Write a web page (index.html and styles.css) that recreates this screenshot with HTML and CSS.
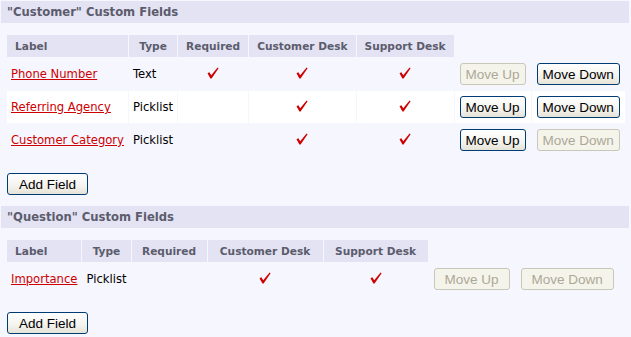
FILE: index.html
```html
<!DOCTYPE html>
<html lang="en">

<head>
    <meta charset="UTF-8">
    <title>Custom Fields</title>
    <link rel="stylesheet" href="styles.css">
</head>

<body>
    <svg width="0" height="0" style="position: absolute;">
        <symbol id="check" viewBox="0 0 12 12">
            <path d="M0.5 6.2 L2.4 5.3 L4.2 8.2 L10.6 0.4 L11.6 1.2 L4.6 11.4 L3.4 11.4 Z" fill="#d00000"/>
        </symbol>
    </svg>

    <!-- Customer fields -->
    <div class="section-title">"Customer" Custom Fields</div>
    <table class="fields">
        <tr>
            <th class="left">Label</th>
            <th>Type</th>
            <th>Required</th>
            <th>Customer Desk</th>
            <th>Support Desk</th>
        </tr>
        <tr>
            <td><a href="#">Phone Number</a></td>
            <td>Text</td>
            <td class="mark"><svg class="check"><use href="#check"/></svg></td>
            <td class="mark"><svg class="check"><use href="#check"/></svg></td>
            <td class="mark"><svg class="check"><use href="#check"/></svg></td>
            <td class="act"><button disabled>Move Up</button></td>
            <td class="act"><button>Move Down</button></td>
        </tr>
        <tr class="alt">
            <td><a href="#">Referring Agency</a></td>
            <td>Picklist</td>
            <td></td>
            <td class="mark"><svg class="check"><use href="#check"/></svg></td>
            <td class="mark"><svg class="check"><use href="#check"/></svg></td>
            <td class="act"><button>Move Up</button></td>
            <td class="act"><button>Move Down</button></td>
        </tr>
        <tr>
            <td><a href="#">Customer Category</a></td>
            <td>Picklist</td>
            <td></td>
            <td class="mark"><svg class="check"><use href="#check"/></svg></td>
            <td class="mark"><svg class="check"><use href="#check"/></svg></td>
            <td class="act"><button>Move Up</button></td>
            <td class="act"><button disabled>Move Down</button></td>
        </tr>
    </table>
    <div class="add-row"><button class="add">Add Field</button></div>

    <!-- Question fields -->
    <div class="section-title">"Question" Custom Fields</div>
    <table class="fields">
        <tr>
            <th class="left">Label</th>
            <th>Type</th>
            <th class="req">Required</th>
            <th class="cust">Customer Desk</th>
            <th class="supp">Support Desk</th>
        </tr>
        <tr>
            <td><a href="#">Importance</a></td>
            <td>Picklist</td>
            <td></td>
            <td class="mark"><svg class="check"><use href="#check"/></svg></td>
            <td class="mark"><svg class="check"><use href="#check"/></svg></td>
            <td class="act"><button class="wide" disabled>Move Up</button></td>
            <td class="act"><button class="wide" disabled>Move Down</button></td>
        </tr>
    </table>
    <div class="add-row"><button class="add">Add Field</button></div>
</body>

</html>
```

FILE: styles.css
```css
body {
    margin: 1px 2px 0 1px;
    background-color: #f6f6ff;
    font-family: "DejaVu Sans", Verdana, sans-serif;
    font-size: 11.6px;
    color: #000;
}

.section-title {
    height: 22px;
    line-height: 22px;
    padding-left: 6px;
    background-color: #e3e3f4;
    color: #5c5c6c;
    font-weight: bold;
}

.fields {
    border-collapse: separate;
    border-spacing: 1px;
    margin: 11px 0 0 5px;
}

.fields th {
    background-color: #e3e3f4;
    color: #5c5c6c;
    font-size: 10.6px;
    font-weight: bold;
    height: 22px;
    padding: 0 8px;
    white-space: nowrap;
}

.fields th.left {
    text-align: left;
}

/* second table spreads its columns a little wider */
.fields th.req {
    width: 59px;
}

.fields th.cust {
    width: 99px;
}

.fields th.supp {
    width: 88px;
}

.fields td {
    height: 22px;
    padding: 5px 4px;
    white-space: nowrap;
}

.fields tr.alt td {
    background-color: #fff;
}

.fields td.mark {
    text-align: center;
}

.fields td.act {
    padding: 5px;
}

.fields a {
    color: #cc0000;
}

.check {
    width: 12px;
    height: 12px;
    vertical-align: -1px;
}

button {
    height: 22px;
    padding: 0 5px;
    font-family: "Liberation Sans", Arial, sans-serif;
    font-size: 13.5px;
    color: #000;
    border: 1px solid #003c74;
    border-radius: 3px;
    background: linear-gradient(#ffffff, #f4f3ee 60%, #e6e3d6);
}

button:disabled {
    color: #aca899;
    border-color: #c9c7ba;
    background: #f5f4ea;
}

button.wide {
    padding: 0 10px;
}

button.add {
    width: 81px;
}

.add-row {
    margin: 16px 0 11px 6px;
}
```
